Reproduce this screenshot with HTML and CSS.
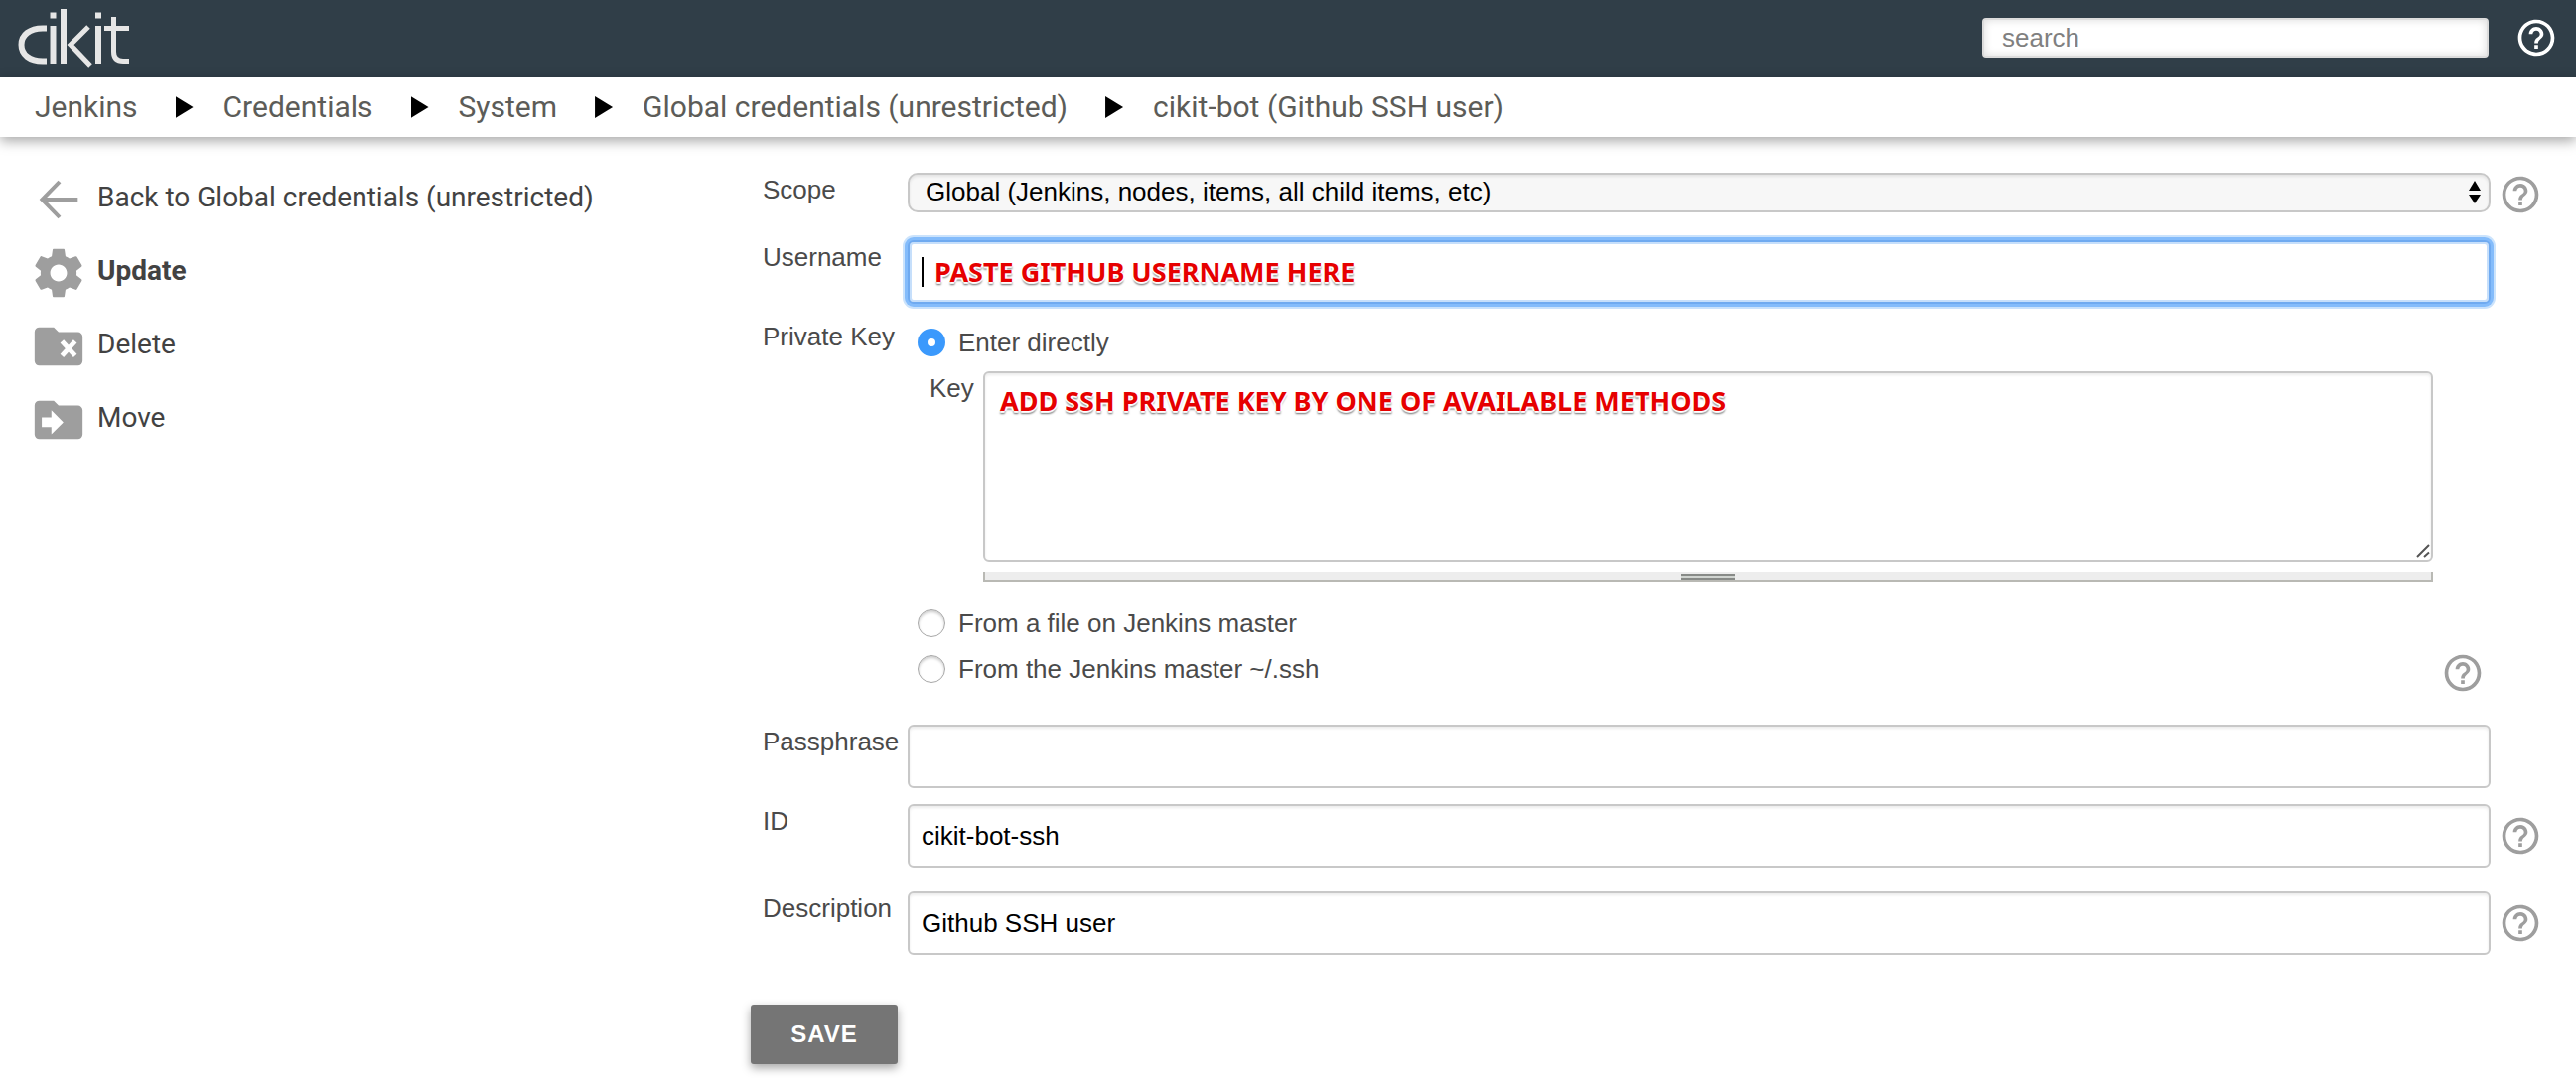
FILE: index.html
```html
<!DOCTYPE html>
<html lang="en">
<head>
<meta charset="utf-8">
<title>Update credentials - cikit</title>
<link rel="stylesheet" href="styles.css">
</head>
<body>
<svg class="sprite" aria-hidden="true">
  <symbol id="help" viewBox="0 0 24 24"><path fill="currentColor" d="M11 18h2v-2h-2v2zm1-16C6.48 2 2 6.480 2 12s4.480 10 10 10 10-4.480 10-10S17.520 2 12 2zm0 18c-4.410 0-8-3.590-8-8s3.590-8 8-8 8 3.590 8 8-3.590 8-8 8zm0-14c-2.210 0-4 1.790-4 4h2c0-1.100.9-2 2-2s2 .9 2 2c0 2-3 1.750-3 5h2c0-2.250 3-2.500 3-5 0-2.210-1.790-4-4-4z"/></symbol>
</svg>
<header class="topbar">
  <a href="#" class="logo" aria-label="cikit">
    <svg width="116" height="62" viewBox="16 7 116 62" fill="none" stroke="#e6e6e6" stroke-width="6">
      <path d="M47 28.500H43C30 28.500 21.500 35 21.500 45S30 61.500 43 61.500H47"/>
      <path d="M53.500 26V64M53.500 12.500V18.500M64 9V64M99 26V64M99 12.500V18.500"/>
      <path d="M89 27L71 45L91 66" stroke-width="5"/>
      <path d="M105 28.500H130M114.500 17V52Q114.500 61.500 124 61.500H130" stroke-width="5"/>
    </svg>
  </a>
  <form class="search">
    <input type="search" placeholder="search" aria-label="Search">
    <a href="#" class="help help-light" aria-label="Search help"><svg><use href="#help"/></svg></a>
  </form>
</header>
<nav class="crumbs" aria-label="Breadcrumb">
  <a href="#">Jenkins</a><span class="sep"></span>
  <a href="#">Credentials</a><span class="sep"></span>
  <a href="#">System</a><span class="sep"></span>
  <a href="#">Global credentials (unrestricted)</a><span class="sep"></span>
  <a href="#">cikit-bot (Github SSH user)</a>
</nav>
<div class="page">
  <nav class="tasks" aria-label="Tasks">
    <a href="#"><svg viewBox="0 0 24 24"><path d="M20 11.200H7.100l5.900-6.100L11.800 4 4 12l7.800 8 1.200-1.100-5.900-6.100H20z"/></svg><span>Back to Global credentials (unrestricted)</span></a>
    <a href="#" class="current"><svg viewBox="0 0 24 24"><path d="M19.430 12.980c.04-.32.07-.64.07-.98s-.03-.66-.07-.98l2.110-1.650c.19-.15.24-.42.12-.64l-2-3.460c-.12-.22-.39-.3-.61-.22l-2.490 1c-.52-.4-1.080-.73-1.690-.98l-.38-2.650C14.460 2.180 14.250 2 14 2h-4c-.25 0-.46.18-.49.42l-.38 2.650c-.61.25-1.170.59-1.690.98l-2.490-1c-.23-.09-.49 0-.61.22l-2 3.460c-.13.22-.07.49.12.64l2.110 1.650c-.04.32-.07.65-.07.98s.03.66.07.98l-2.110 1.650c-.19.15-.24.42-.12.64l2 3.460c.12.22.39.3.61.22l2.490-1c.52.4 1.080.73 1.690.98l.38 2.650c.03.24.24.42.49.42h4c.25 0 .46-.18.49-.42l.38-2.650c.61-.25 1.170-.59 1.690-.98l2.490 1c.23.09.49 0 .61-.22l2-3.460c.12-.22.07-.49-.12-.64l-2.110-1.650zM12 15.500c-1.930 0-3.500-1.570-3.500-3.500s1.570-3.500 3.500-3.500 3.500 1.570 3.500 3.500-1.570 3.500-3.500 3.500z"/></svg><span>Update</span></a>
    <a href="#"><svg viewBox="0 0 24 24"><path d="M10 4H4a2 2 0 0 0-2 2v12a2 2 0 0 0 2 2h16a2 2 0 0 0 2-2V8a2 2 0 0 0-2-2h-8z"/><path class="cut" d="M13.500 9.500l5.500 6M19 9.500l-5.500 6" transform="translate(-.1 .4)"/></svg><span>Delete</span></a>
    <a href="#"><svg viewBox="0 0 24 24"><path d="M10 4H4a2 2 0 0 0-2 2v12a2 2 0 0 0 2 2h16a2 2 0 0 0 2-2V8a2 2 0 0 0-2-2h-8z"/><path class="hole" d="M5 11h4V8l5 5-5 5v-3H5z"/></svg><span>Move</span></a>
  </nav>
  <form class="config">
    <div class="row scope-row">
      <label class="name" for="scope">Scope</label>
      <div class="control picker">
        <select id="scope"><option>Global (Jenkins, nodes, items, all child items, etc)</option></select>
        <svg class="arrows" viewBox="0 0 12 24"><path d="M0 10L6 0l6 10zM0 14l6 9 6-9z"/></svg>
      </div>
      <a href="#" class="help" aria-label="Help for Scope"><svg><use href="#help"/></svg></a>
    </div>
    <div class="row">
      <label class="name" for="username">Username</label>
      <div class="control">
        <input class="text active" id="username" type="text">
        <p class="note"><span class="caret"></span>PASTE GITHUB USERNAME HERE</p>
      </div>
    </div>
    <div class="row key-row" role="radiogroup" aria-labelledby="pk">
      <span class="name" id="pk">Private Key</span>
      <div class="control">
        <label class="choice"><input type="radio" name="source" checked>Enter directly</label>
        <div class="key">
          <label for="key">Key</label>
          <div class="key-field">
            <textarea id="key"></textarea>
            <p class="note key-note">ADD SSH PRIVATE KEY BY ONE OF AVAILABLE METHODS</p>
            <svg class="corner" viewBox="0 0 14 14"><path d="M1 13L13 1M8 13L13 8.500"/></svg>
            <div class="grip"><span></span></div>
          </div>
        </div>
        <label class="choice"><input type="radio" name="source">From a file on Jenkins master</label>
        <div class="choice-help">
          <label class="choice"><input type="radio" name="source">From the Jenkins master ~/.ssh</label>
          <a href="#" class="help" aria-label="Help for Private Key"><svg><use href="#help"/></svg></a>
        </div>
      </div>
    </div>
    <div class="row">
      <label class="name" for="pass">Passphrase</label>
      <div class="control"><input class="text" id="pass" type="password"></div>
    </div>
    <div class="row id-row">
      <label class="name" for="id">ID</label>
      <div class="control"><input class="text" id="id" type="text" value="cikit-bot-ssh"></div>
      <a href="#" class="help" aria-label="Help for ID"><svg><use href="#help"/></svg></a>
    </div>
    <div class="row">
      <label class="name" for="desc">Description</label>
      <div class="control"><input class="text" id="desc" type="text" value="Github SSH user"></div>
      <a href="#" class="help" aria-label="Help for Description"><svg><use href="#help"/></svg></a>
    </div>
    <button type="button" class="save">SAVE</button>
  </form>
</div>
</body>
</html>
```
FILE: styles.css
```css
* { box-sizing: border-box; }
body {
  margin: 0;
  background: #fff;
  color: #4a4a4a;
  font: 26px/30px "Liberation Sans", Arial, sans-serif;
}
input, select, textarea, button { font: inherit; margin: 0; }
a { color: inherit; text-decoration: none; }
.sprite { position: absolute; width: 0; height: 0; }

/* Top bar */
.topbar {
  display: flex;
  justify-content: space-between;
  align-items: flex-start;
  height: 78px;
  padding: 7px 18px 0 16px;
  background: #303e48;
}
.logo svg { display: block; }
.search { display: flex; align-items: center; gap: 26px; padding-top: 9px; }
.search input {
  width: 510px;
  height: 40px;
  padding: 0 18px;
  border: 2px solid #dcdcdc;
  border-radius: 4px;
  background: #fff;
  box-shadow: inset 0 0 8px rgba(0, 0, 0, .15);
  appearance: none;
}
.search input::placeholder { color: #808080; opacity: 1; }
.help { display: block; width: 44px; height: 44px; color: #9e9e9e; }
.help svg { display: block; width: 44px; height: 44px; }
.help-light { color: #fff; }

/* Breadcrumb */
.crumbs {
  position: relative;
  display: flex;
  align-items: center;
  gap: 38px;
  height: 60px;
  padding: 0 35px;
  background: #fff;
  box-shadow: 0 4px 12px rgba(0, 0, 0, .35);
  color: #5c5c58;
  font: 30px/60px Roboto, sans-serif;
}
.crumbs .sep + a { margin-left: -8px; }
.sep {
  width: 18px;
  height: 22px;
  background: #000;
  clip-path: polygon(0 0, 100% 50%, 0 100%);
}

.page { display: flex; align-items: flex-start; }

/* Side tasks */
.tasks {
  flex: 0 0 756px;
  padding: 26px 0 0 30px;
  color: #424242;
  font: 28px/70px Roboto, sans-serif;
}
.tasks a { display: flex; gap: 10px; height: 74px; }
.tasks svg { width: 58px; height: 58px; margin-top: 8px; fill: #9e9e9e; }
.tasks .cut { stroke: #fff; stroke-width: 2; }
.tasks .hole { fill: #fff; }
.current { font-weight: 700; }

/* Form */
.config { flex: 1; min-width: 0; padding: 36px 0 16px; }
.row {
  display: grid;
  grid-template-columns: 146px minmax(0, 1fr) 86px;
  align-items: center;
  margin-bottom: 16px;
  padding-left: 12px;
}
.row > .help { margin-left: 8px; }
.scope-row { margin-bottom: 28px; }
.scope-row > .help { margin-bottom: -4px; }
.key-row { margin-bottom: 30px; }
.id-row { margin-bottom: 24px; }
.name { align-self: start; padding-top: 2px; }
.control { position: relative; }
.picker select {
  display: block;
  width: 100%;
  height: 40px;
  padding: 0 16px 2px;
  border: 2px solid #c8c8c8;
  border-radius: 10px;
  background: #f7f7f7;
  box-shadow: inset 0 2px 3px rgba(0, 0, 0, .08);
  color: #000;
  appearance: none;
}
.arrows { position: absolute; top: 8px; right: 10px; width: 12px; height: 24px; }
.text {
  display: block;
  width: 100%;
  height: 64px;
  padding: 0 12px;
  border: 2px solid #c8c8c8;
  border-radius: 6px;
  background: #fff;
  box-shadow: inset 0 2px 3px rgba(0, 0, 0, .08);
  color: #000;
}
.active {
  border-color: #6faaf0;
  box-shadow: inset 0 0 0 2px #c6dffb, 0 0 0 3px #84bcfb, 0 0 0 5px #cbe3fc;
}
.note {
  position: absolute;
  top: 14px;
  left: 14px;
  display: flex;
  align-items: center;
  gap: 11px;
  margin: 0;
  color: #e60000;
  font: 700 27px/36px "Noto Sans", sans-serif;
  white-space: nowrap;
  text-shadow: 0 2px 1px #fff, 2px 0 1px #fff, -2px 0 1px #fff, 0 3px 2px rgba(0, 0, 0, .6);
  pointer-events: none;
}
.caret { width: 2px; height: 30px; background: #000; }
.choice { display: flex; align-items: center; height: 46px; padding-left: 10px; }
.choice input {
  width: 28px;
  height: 28px;
  margin-right: 13px;
  border: 1px solid #a8a8a8;
  border-radius: 50%;
  background: #fff;
  box-shadow: inset 0 2px 3px rgba(0, 0, 0, .2);
  appearance: none;
}
.choice input:checked { border: 10px solid #3b99fc; box-shadow: none; }
.key { display: flex; padding: 6px 58px 19px 22px; }
.key > label { flex: 0 0 54px; padding-top: 2px; }
.key-field { position: relative; flex: 1; }
.key textarea {
  display: block;
  width: 100%;
  height: 192px;
  border: 2px solid #c8c8c8;
  border-radius: 6px;
  box-shadow: inset 0 2px 3px rgba(0, 0, 0, .08);
  resize: none;
}
.key-note { top: 12px; left: 17px; }
.corner {
  position: absolute;
  top: 174px;
  right: 3px;
  width: 14px;
  height: 14px;
  fill: none;
  stroke: #555;
  stroke-width: 2;
}
.grip {
  display: flex;
  justify-content: center;
  height: 10px;
  margin-top: 10px;
  padding-top: 2px;
  border: solid #b9b9b4;
  border-width: 0 2px 2px;
  background: #ededed;
}
.grip span {
  width: 54px;
  height: 6px;
  border: solid #888b88;
  border-width: 2px 0;
  background: #d0d4d0;
}
.choice-help { display: flex; align-items: flex-start; justify-content: space-between; padding-right: 6px; }
.choice-help .help { margin-top: 5px; }
.save {
  display: block;
  width: 148px;
  height: 60px;
  margin-top: 50px;
  border: 0;
  border-radius: 3px;
  background: #757575;
  box-shadow: 0 4px 10px rgba(0, 0, 0, .35);
  color: #fff;
  font-size: 24px;
  font-weight: 700;
  letter-spacing: 1px;
}
```
